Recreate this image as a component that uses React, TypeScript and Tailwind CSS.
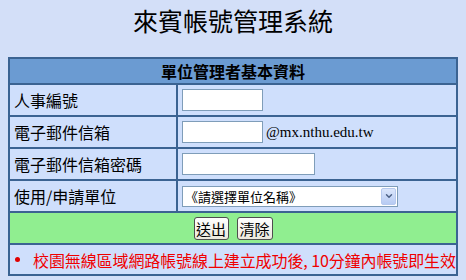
import { ChevronDown } from 'lucide-react';

const cjk = "font-['Noto_Sans_CJK_TC','Noto_Sans',sans-serif]";

function Row({ label, children }: { label: string; children: React.ReactNode }) {
  return (
    <div className="grid grid-cols-[166px_1fr] gap-[2px] h-[30px]">
      <div className="bg-[#cfdffc] flex items-center pl-1 text-[16px] text-black leading-none">{label}</div>
      <div className="bg-[#cfdffc] flex items-center pl-1">{children}</div>
    </div>
  );
}

export default function App() {
  return (
    <div className={`w-[466px] h-[280px] bg-[#d3dff8] ${cjk} overflow-hidden`}>
      {/* Title */}
      <div className="h-[57px] flex justify-center pt-[5px]">
        <h1 className="text-[25px] leading-[30px] text-black font-normal">來賓帳號管理系統</h1>
      </div>

      {/* Form table */}
      <div className="mx-[8px] w-[450px] bg-[#3b6392] p-[2px] flex flex-col gap-[2px]">
        <div className="h-[24px] bg-[#6b9bd2] flex items-center justify-center text-[16px] font-bold text-black leading-none">
          單位管理者基本資料
        </div>

        <Row label="人事編號">
          <input className="w-[81px] h-[22px] bg-white border border-[#7f9db9] outline-none" />
        </Row>

        <Row label="電子郵件信箱">
          <input className="w-[81px] h-[22px] bg-white border border-[#7f9db9] outline-none" />
          <span className="ml-[3px] text-[15px] font-['Liberation_Serif',serif] text-black">@mx.nthu.edu.tw</span>
        </Row>

        <Row label="電子郵件信箱密碼">
          <input type="password" className="w-[133px] h-[22px] bg-white border border-[#7f9db9] outline-none" />
        </Row>

        <Row label="使用/申請單位">
          <div className="w-[216px] h-[21px] bg-white border border-[#7f9db9] flex items-center justify-between">
            <span className="pl-[2px] text-[13px] leading-none text-black">《請選擇單位名稱》</span>
            <span className="w-[15px] h-[17px] mr-[1px] bg-gradient-to-b from-[#dbe6fb] to-[#b7cbf3] border border-[#b6c9ee] rounded-[2px] flex items-center justify-center">
              <ChevronDown className="w-[10px] h-[10px] text-[#4d6185]" strokeWidth={3.5} />
            </span>
          </div>
        </Row>

        <div className="h-[30px] bg-[#90ee90] flex items-center justify-center gap-[8px]">
          <button className="h-[23px] w-[35px] p-0 rounded-[3px] border border-[#4e4e4e] bg-gradient-to-b from-white to-[#ebe8dc] text-[15px] leading-none text-black">送出</button>
          <button className="h-[23px] w-[36px] p-0 rounded-[3px] border border-[#4e4e4e] bg-gradient-to-b from-white to-[#ebe8dc] text-[15px] leading-none text-black">清除</button>
        </div>

        <div className="h-[29px] bg-[#cfdffc] flex items-center pl-[5px] whitespace-nowrap overflow-hidden">
          <span className="w-[5px] h-[5px] shrink-0 rounded-full bg-[#e00000] mr-[13px]" />
          <span className="text-[16px] leading-none text-[#f00000] tracking-[-0.1px]">校園無線區域網路帳號線上建立成功後, 10分鐘內帳號即生效</span>
        </div>
      </div>
    </div>
  );
}
